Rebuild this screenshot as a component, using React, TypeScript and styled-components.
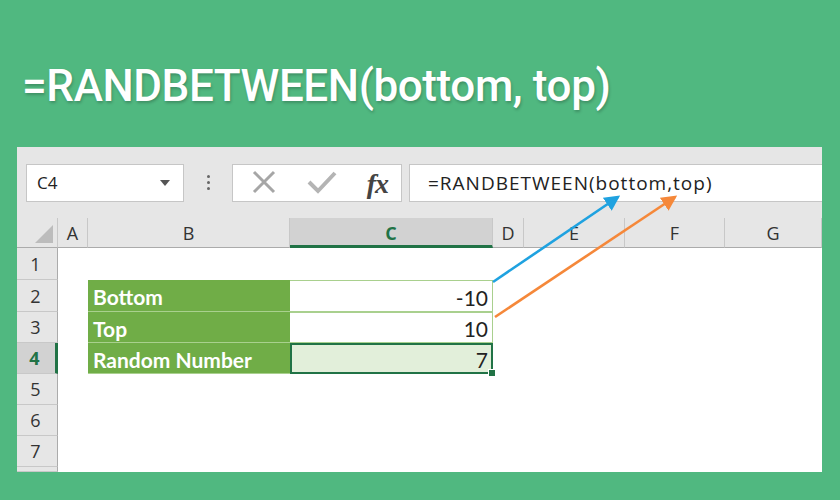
import React, { FC } from "react";
import styled, { createGlobalStyle } from "styled-components";

const GlobalStyle = createGlobalStyle`
  html, body {
    margin: 0;
    padding: 0;
    background: #50b880;
  }
`;

const COLS = [41, 30, 202, 203, 31, 101, 100, 97];
const LETTERS = ["A", "B", "C", "D", "E", "F", "G"];
const ROW_HEIGHTS = [32, 32, 31, 31, 31, 31, 31, 5];

type CellKind = "empty" | "label" | "value" | "selected";

interface CellData {
  kind: CellKind;
  text?: string;
}

const tableRows: Record<number, [CellData, CellData]> = {
  2: [
    { kind: "label", text: "Bottom" },
    { kind: "value", text: "-10" },
  ],
  3: [
    { kind: "label", text: "Top" },
    { kind: "value", text: "10" },
  ],
  4: [
    { kind: "label", text: "Random Number" },
    { kind: "selected", text: "7" },
  ],
};

const SELECTED_COL = "C";
const SELECTED_ROW = 4;

const App: FC = () => {
  return (
    <Page>
      <GlobalStyle />
      <Title>=RANDBETWEEN(bottom, top)</Title>
      <Window>
        <Toolbar>
          <NameBox>
            <span>C4</span>
            <DropArrow />
          </NameBox>
          <Dots>
            <i />
            <i />
            <i />
          </Dots>
          <FxBox>
            <svg width="26" height="24" viewBox="0 0 26 24">
              <path
                d="M3 2 L23 22 M23 2 L3 22"
                stroke="#a6a6a6"
                strokeWidth="3"
                fill="none"
              />
            </svg>
            <svg width="30" height="24" viewBox="0 0 30 24">
              <path
                d="M2 12 L11 21 L28 3"
                stroke="#b4b4b4"
                strokeWidth="4"
                fill="none"
              />
            </svg>
            <FxLabel>fx</FxLabel>
          </FxBox>
          <FormulaBox>=RANDBETWEEN(bottom,top)</FormulaBox>
        </Toolbar>

        <Sheet>
          <Corner>
            <svg width="18" height="18" viewBox="0 0 18 18">
              <polygon points="18,0 18,18 0,18" fill="#bcbcbc" />
            </svg>
          </Corner>
          {LETTERS.map((l) => (
            <ColHead key={l} $selected={l === SELECTED_COL}>
              {l}
            </ColHead>
          ))}
          {ROW_HEIGHTS.map((_, i) => {
            const row = i + 1;
            const data = tableRows[row];
            return (
              <React.Fragment key={row}>
                <RowHead $selected={row === SELECTED_ROW}>
                  {row < 8 ? row : ""}
                </RowHead>
                {LETTERS.map((l) => {
                  let cell: CellData = { kind: "empty" };
                  if (data && l === "B") cell = data[0];
                  if (data && l === "C") cell = data[1];
                  return (
                    <Cell key={l} $kind={cell.kind}>
                      {cell.text}
                    </Cell>
                  );
                })}
              </React.Fragment>
            );
          })}
        </Sheet>

        <Arrows width="805" height="325" viewBox="0 0 805 325">
          <defs>
            <marker
              id="headBlue"
              markerWidth="6"
              markerHeight="6"
              refX="5"
              refY="3"
              orient="auto"
              markerUnits="strokeWidth"
            >
              <path d="M0 0 L6 3 L0 6 Z" fill="#1fa2e0" />
            </marker>
            <marker
              id="headOrange"
              markerWidth="6"
              markerHeight="6"
              refX="5"
              refY="3"
              orient="auto"
              markerUnits="strokeWidth"
            >
              <path d="M0 0 L6 3 L0 6 Z" fill="#f5883a" />
            </marker>
          </defs>
          <line
            x1="476"
            y1="135"
            x2="601"
            y2="50"
            stroke="#1fa2e0"
            strokeWidth="2.6"
            markerEnd="url(#headBlue)"
          />
          <line
            x1="478"
            y1="170"
            x2="658"
            y2="50"
            stroke="#f5883a"
            strokeWidth="2.6"
            markerEnd="url(#headOrange)"
          />
        </Arrows>
      </Window>
    </Page>
  );
};

export default App;

const Page = styled.div`
  width: 840px;
  height: 500px;
  overflow: hidden;
  background: #50b880;
`;

const Title = styled.h1`
  margin: 0;
  height: 147px;
  box-sizing: border-box;
  padding: 58px 0 0 22px;
  font-family: Roboto, "Liberation Sans", sans-serif;
  font-weight: 500;
  font-size: 44px;
  line-height: 56px;
  color: #ffffff;
  letter-spacing: -0.4px;
  text-shadow: 1px 2px 3px rgba(0, 0, 0, 0.22);
  white-space: nowrap;
`;

const Window = styled.div`
  position: relative;
  margin-left: 17px;
  width: 805px;
  height: 325px;
  background: #e6e6e6;
  overflow: hidden;
`;

const Toolbar = styled.div`
  height: 71px;
  display: flex;
  align-items: center;
  padding-left: 9px;
  font-family: "Open Sans", "Noto Sans", sans-serif;
`;

const Box = styled.div`
  height: 38px;
  box-sizing: border-box;
  background: #ffffff;
  border: 1px solid #c6c6c6;
  display: flex;
  align-items: center;
`;

const NameBox = styled(Box)`
  width: 158px;
  padding: 0 13px 0 10px;
  justify-content: space-between;
  font-size: 17px;
  color: #222;
`;

const DropArrow = styled.span`
  width: 0;
  height: 0;
  border-left: 5px solid transparent;
  border-right: 5px solid transparent;
  border-top: 6px solid #555;
`;

const Dots = styled.div`
  width: 48px;
  display: flex;
  flex-direction: column;
  align-items: center;
  gap: 3px;

  i {
    display: block;
    width: 3px;
    height: 3px;
    border-radius: 50%;
    background: #666;
  }
`;

const FxBox = styled(Box)`
  width: 170px;
  padding: 0 13px 2px 18px;
  justify-content: space-between;
`;

const FxLabel = styled.span`
  font-family: "Liberation Serif", "DejaVu Serif", serif;
  font-style: italic;
  font-weight: 700;
  font-size: 28px;
  color: #444;
  letter-spacing: -1px;
  padding-top: 4px;
`;

const FormulaBox = styled(Box)`
  margin-left: 7px;
  flex: 1;
  border-right: none;
  padding-left: 18px;
  font-size: 19px;
  letter-spacing: 1px;
  color: #222;
`;

const Sheet = styled.div`
  display: grid;
  grid-template-columns: ${COLS.map((c) => `${c}px`).join(" ")};
  grid-template-rows: 30px ${ROW_HEIGHTS.map((h) => `${h}px`).join(" ")};
  background: #ffffff;
  font-family: "Open Sans", "Noto Sans", sans-serif;
`;

const Corner = styled.div`
  background: #e6e6e6;
  border-right: 1px solid #c8c8c8;
  border-bottom: 1px solid #ababab;
  display: flex;
  align-items: flex-end;
  justify-content: flex-end;
  padding: 0 4px 4px 0;
  box-sizing: border-box;
`;

const ColHead = styled.div<{ $selected?: boolean }>`
  background: ${(p) => (p.$selected ? "#d2d2d2" : "#e6e6e6")};
  color: ${(p) => (p.$selected ? "#217346" : "#333")};
  font-weight: ${(p) => (p.$selected ? 700 : 400)};
  border-right: 1px solid #c8c8c8;
  border-bottom: ${(p) =>
    p.$selected ? "3px solid #217346" : "1px solid #ababab"};
  box-sizing: border-box;
  display: flex;
  align-items: center;
  justify-content: center;
  font-size: 18px;
  padding-top: ${(p) => (p.$selected ? "2px" : "0")};
`;

const RowHead = styled.div<{ $selected?: boolean }>`
  background: ${(p) => (p.$selected ? "#d2d2d2" : "#e6e6e6")};
  color: ${(p) => (p.$selected ? "#217346" : "#333")};
  font-weight: ${(p) => (p.$selected ? 700 : 400)};
  border-bottom: 1px solid #c8c8c8;
  border-right: ${(p) =>
    p.$selected ? "3px solid #217346" : "1px solid #ababab"};
  box-sizing: border-box;
  display: flex;
  align-items: center;
  justify-content: center;
  padding-right: 3px;
  font-size: 18px;
`;

const kindStyles: Record<CellKind, string> = {
  empty: "",
  label: `
    background: #70ad47;
    color: #ffffff;
    font-weight: 700;
    border-bottom: 1px solid #a9d08e;
    padding-left: 5px;
  `,
  value: `
    background: #ffffff;
    color: #222;
    justify-content: flex-end;
    border-right: 1px solid #a9d08e;
    border-bottom: 1px solid #a9d08e;
    border-top: 1px solid #a9d08e;
    padding-right: 4px;
  `,
  selected: `
    background: #e2efda;
    color: #222;
    justify-content: flex-end;
    box-shadow: inset 0 0 0 2px #217346;
    padding-right: 5px;
    &::after {
      content: "";
      position: absolute;
      right: -3px;
      bottom: -3px;
      width: 6px;
      height: 6px;
      background: #217346;
      border: 1px solid #ffffff;
    }
  `,
};

const Cell = styled.div<{ $kind: CellKind }>`
  position: relative;
  box-sizing: border-box;
  display: flex;
  align-items: center;
  font-family: Lato, "Open Sans", sans-serif;
  font-size: 21px;
  padding-top: 2px;
  ${(p) => kindStyles[p.$kind]}
`;

const Arrows = styled.svg`
  position: absolute;
  left: 0;
  top: 0;
  pointer-events: none;
`;
